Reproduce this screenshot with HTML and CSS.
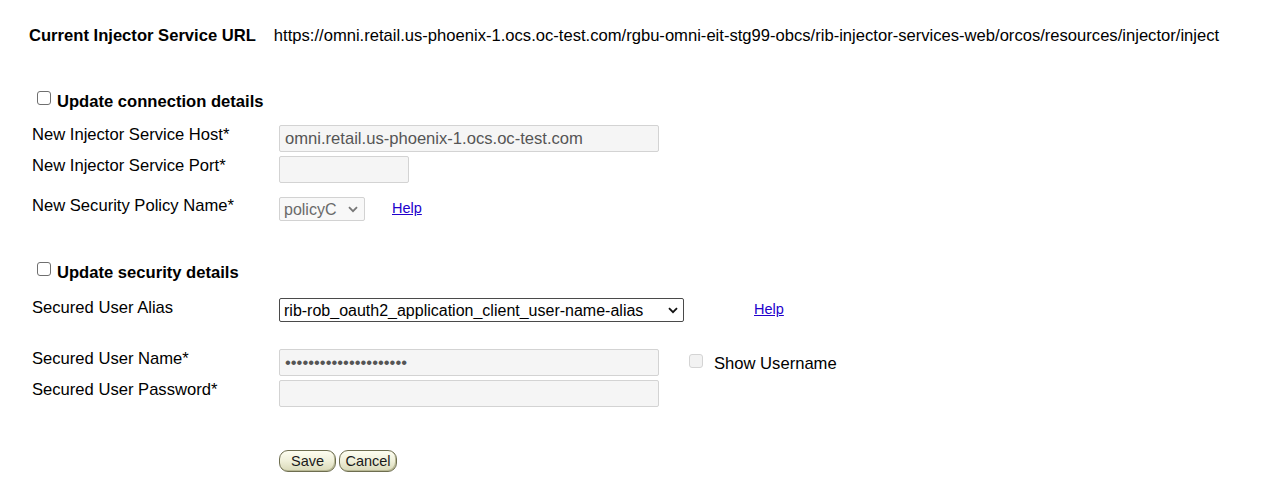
FILE: index.html
```html
<!DOCTYPE html>
<html lang="en">
<head>
<meta charset="utf-8">
<title>Injector Service</title>
<link rel="stylesheet" href="styles.css">
</head>
<body>
<div class="page">
  <div class="url-row">
    <span class="url-label">Current Injector Service URL</span>
    <span class="url">https://omni.retail.us-phoenix-1.ocs.oc-test.com/rgbu-omni-eit-stg99-obcs/rib-injector-services-web/orcos/resources/injector/inject</span>
  </div>

  <section class="group group-connection">
    <label class="group-title"><input type="checkbox" class="cb">Update connection details</label>
    <div class="form">
      <div class="row row-host">
        <span class="row-label">New Injector Service Host*</span>
        <input class="field field-wide" type="text" value="omni.retail.us-phoenix-1.ocs.oc-test.com" disabled>
      </div>
      <div class="row row-port">
        <span class="row-label">New Injector Service Port*</span>
        <input class="field field-port" type="text" value="" disabled>
      </div>
      <div class="row row-policy">
        <span class="row-label">New Security Policy Name*</span>
        <span class="sel-wrap sel-wrap-policy">
          <select class="sel sel-policy" disabled><option>policyC</option></select>
          <svg class="chev chev-disabled" width="10" height="7" viewBox="0 0 10 7"><path d="M1 1.2 L5 5.2 L9 1.2" fill="none" stroke="currentColor" stroke-width="1.8"/></svg>
        </span>
        <a href="#" class="help help-policy">Help</a>
      </div>
    </div>
  </section>

  <section class="group group-security">
    <label class="group-title"><input type="checkbox" class="cb">Update security details</label>
    <div class="form">
      <div class="row row-alias">
        <span class="row-label">Secured User Alias</span>
        <span class="sel-wrap sel-wrap-alias">
          <select class="sel sel-alias"><option>rib-rob_oauth2_application_client_user-name-alias</option></select>
          <svg class="chev" width="10" height="7" viewBox="0 0 10 7"><path d="M1 1.2 L5 5.2 L9 1.2" fill="none" stroke="currentColor" stroke-width="1.8"/></svg>
        </span>
        <a href="#" class="help help-alias">Help</a>
      </div>
      <div class="row row-user">
        <span class="row-label">Secured User Name*</span>
        <input class="field field-wide" type="password" value="xxxxxxxxxxxxxxxxxxxxx" disabled>
        <label class="show-user"><input type="checkbox" class="cb cb-show" disabled>Show Username</label>
      </div>
      <div class="row row-pass">
        <span class="row-label">Secured User Password*</span>
        <input class="field field-wide" type="password" value="" disabled>
      </div>
    </div>
  </section>

  <div class="actions">
    <button type="button" class="btn btn-save">Save</button>
    <button type="button" class="btn btn-cancel">Cancel</button>
  </div>
</div>
</body>
</html>
```

FILE: styles.css
```css
html, body {
  margin: 0;
  padding: 0;
  background: #ffffff;
}

body {
  font-family: "Liberation Sans", Arial, sans-serif;
  font-size: 16.6px;
  color: #000;
}

.page {
  padding-top: 26px;
}

.url-row {
  display: flex;
  gap: 18px;
  padding-left: 29px;
  line-height: 19px;
  white-space: nowrap;
}

.url-label {
  font-weight: bold;
}

.group-connection {
  margin-top: 46px;
}

.group-security {
  margin-top: 41px;
}

.group-title {
  display: flex;
  align-items: flex-start;
  padding-left: 37px;
  font-weight: bold;
  line-height: 21px;
}

.cb {
  appearance: none;
  -webkit-appearance: none;
  box-sizing: border-box;
  width: 14px;
  height: 14px;
  margin: 0 6px 0 0;
  border: 1px solid #6f6f6f;
  border-radius: 3px;
  background: #fff;
  flex: none;
}

.form {
  padding-left: 32px;
}

.group-connection .form {
  margin-top: 13px;
}

.group-security .form {
  margin-top: 15px;
}

.row {
  display: flex;
  align-items: flex-start;
}

.row-label {
  width: 247px;
  flex: none;
  line-height: 19px;
}

.field {
  box-sizing: border-box;
  height: 27px;
  margin: 0;
  padding: 0 5px;
  border: 1px solid #d3d3d3;
  border-radius: 2px;
  background: #f5f5f5;
  color: #555;
  font-family: "Liberation Sans", Arial, sans-serif;
  font-size: 16.6px;
}

.field-wide {
  width: 380px;
}

.field-port {
  width: 130px;
}

.row-port {
  margin-top: 4px;
}

.row-policy {
  margin-top: 13px;
}

.sel-wrap {
  position: relative;
  display: inline-flex;
  flex: none;
}

.sel-wrap-policy {
  margin-top: 1px;
}

.sel {
  appearance: none;
  -webkit-appearance: none;
  box-sizing: border-box;
  margin: 0;
  height: 24px;
  padding: 0 20px 0 4px;
  font-family: "Liberation Sans", Arial, sans-serif;
  font-size: 16px;
  border-radius: 2px;
}

.sel-policy {
  width: 86px;
  color: #6a6a6a;
  border: 1px solid #d2d2d2;
  background: #f8f8f8;
  opacity: 1;
}

.sel-alias {
  width: 405px;
  color: #000;
  border: 1px solid #4a4a4a;
  background: #fff;
}

.chev {
  position: absolute;
  top: 9px;
  right: 6px;
  color: #111;
  pointer-events: none;
}

.chev-disabled {
  right: 7px;
  color: #777;
}

.help {
  color: #2200cc;
  font-size: 14.5px;
  line-height: 18px;
  text-decoration: underline;
}

.help-policy {
  margin: 3px 0 0 27px;
}

.help-alias {
  margin: 2px 0 0 70px;
}

.row-user {
  margin-top: 27px;
}

.row-pass {
  margin-top: 4px;
}

.show-user {
  display: flex;
  align-items: flex-start;
  margin: 5px 0 0 30px;
  line-height: 19px;
}

.cb-show {
  margin: 0 11px 0 0;
  border-color: #d4d4d4;
  background: #f2f2f2;
}

.actions {
  display: flex;
  gap: 3px;
  margin-top: 43px;
  padding-left: 279px;
}

.btn {
  box-sizing: border-box;
  height: 22px;
  padding: 0;
  border: 1px solid #6e6e50;
  border-radius: 9px;
  background: linear-gradient(#fdfdf0 0%, #f1f1dc 45%, #d9d9b8 100%);
  color: #1a1a1a;
  font-family: "Liberation Sans", Arial, sans-serif;
  font-size: 14.5px;
  line-height: 20px;
  box-shadow: inset -1px -1px 0 #b9b995;
}

.btn-save {
  width: 57px;
}

.btn-cancel {
  width: 58px;
}
```
